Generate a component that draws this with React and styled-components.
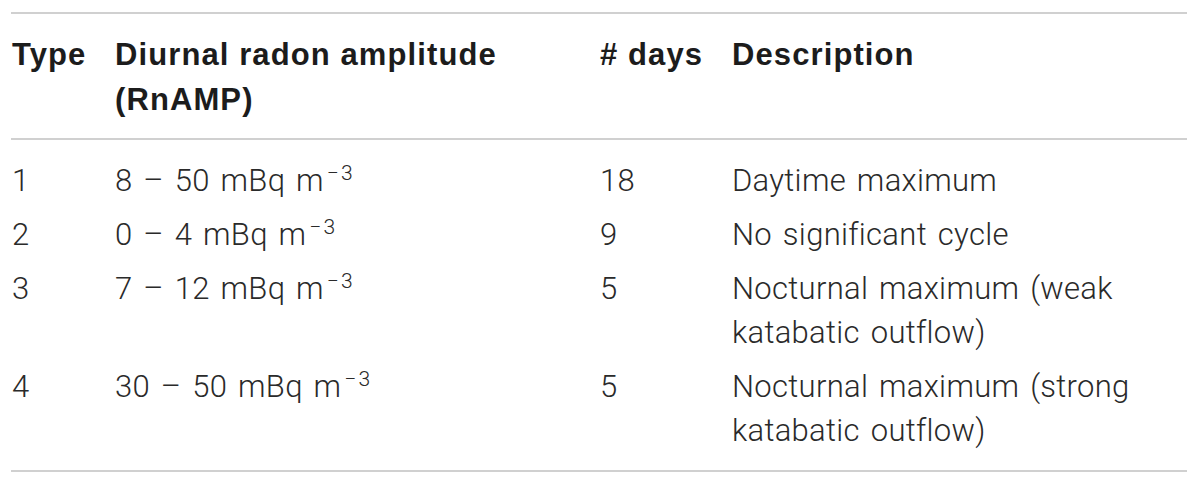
import React from "react";
import styled, { createGlobalStyle } from "styled-components";

// page reset so the table starts at the same spot as the picture
const Global = createGlobalStyle`
  html, body {
    margin: 0;
    padding: 0;
    background: #fff;
  }
`;

const Page = styled.div`
  padding: 12px 13px 0 11px;
`;

// the table with the grey rules on top, under the header and at the bottom
const Table = styled.table`
  width: 100%;
  border-collapse: collapse;
  table-layout: fixed;
  border-top: 2px solid #d0d0d0;
  border-bottom: 2px solid #d0d0d0;
  color: #333;
`;

const Head = styled.thead`
  border-bottom: 2px solid #d0d0d0;
`;

const Th = styled.th`
  padding: 18px 0 16px 1px;
  text-align: left;
  vertical-align: top;
  font-family: "Liberation Sans", Arial, sans-serif;
  font-weight: 700;
  font-size: 31px;
  letter-spacing: 1.1px;
  line-height: 45px;
  color: #1c1c1c;
`;

const Row = styled.tr`
  &:first-child td {
    padding-top: 19px;
  }
  &:last-child td {
    padding-bottom: 17px;
  }
`;

const Td = styled.td`
  padding: 5px 0 5px 1px;
  vertical-align: top;
  font-family: Roboto, "Liberation Sans", sans-serif;
  font-weight: 300;
  font-size: 31px;
  letter-spacing: 0.3px;
  word-spacing: 3px;
  line-height: 44px;
  color: #2a2a2a;
`;

// the raised "−3" after the unit
const Sup = styled.sup`
  font-size: 21px;
  line-height: 0;
  vertical-align: 11px;
  margin-left: 3px;
  letter-spacing: 2px;
`;

const rows = [
  { type: "1", range: "8 – 50", days: "18", desc: "Daytime maximum" },
  { type: "2", range: "0 – 4", days: "9", desc: "No significant cycle" },
  { type: "3", range: "7 – 12", days: "5", desc: "Nocturnal maximum (weak katabatic outflow)" },
  { type: "4", range: "30 – 50", days: "5", desc: "Nocturnal maximum (strong katabatic outflow)" },
];

export default function App() {
  return (
    <>
      <Global />
      <Page>
        <Table>
          <colgroup>
            <col style={{ width: 103 }} />
            <col style={{ width: 485 }} />
            <col style={{ width: 132 }} />
            <col />
          </colgroup>
          <Head>
            <tr>
              <Th>Type</Th>
              <Th>Diurnal radon amplitude<br />(RnAMP)</Th>
              <Th># days</Th>
              <Th>Description</Th>
            </tr>
          </Head>
          <tbody>
            {rows.map((r) => (
              <Row key={r.type}>
                <Td>{r.type}</Td>
                <Td>
                  {r.range} mBq m<Sup>−3</Sup>
                </Td>
                <Td>{r.days}</Td>
                <Td>{r.desc}</Td>
              </Row>
            ))}
          </tbody>
        </Table>
      </Page>
    </>
  );
}
